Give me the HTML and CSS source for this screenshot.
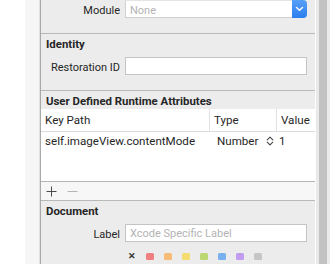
FILE: index.html
```html
<!DOCTYPE html>
<html lang="en">
<head>
  <meta charset="UTF-8">
  <title>Identity Inspector</title>
  <link rel="stylesheet" href="styles.css">
</head>
<body>
  <div class="screen">
    <div class="gutter"></div>
    <div class="inspector">
      <!-- Module -->
      <div class="row module-row">
        <label class="row-label">Module</label>
        <div class="popup">
          <span class="placeholder">None</span>
          <span class="popup-btn">
            <svg width="9" height="6" viewBox="0 0 9 6"><path d="M1.5 1.5 L4.5 4.3 L7.5 1.5" fill="none" stroke="#fff" stroke-width="1.5" stroke-linecap="round" stroke-linejoin="round"/></svg>
          </span>
        </div>
      </div>

      <!-- Identity -->
      <div class="section identity">
        <h2>Identity</h2>
        <div class="row">
          <label class="row-label">Restoration ID</label>
          <div class="field"></div>
        </div>
      </div>

      <!-- Runtime attributes -->
      <div class="section runtime">
        <h2>User Defined Runtime Attributes</h2>
        <div class="attr-table">
          <div class="thead">
            <span class="cell">Key Path</span>
            <span class="cell col-div">Type</span>
            <span class="cell col-div">Value</span>
          </div>
          <div class="trow">
            <span class="cell">self.imageView.contentMode</span>
            <span class="cell type-cell">Number
              <svg class="stepper" width="8" height="10" viewBox="0 0 8 10"><path d="M1.2 3.8 L4 1.2 L6.8 3.8 M1.2 6.2 L4 8.8 L6.8 6.2" fill="none" stroke="#444" stroke-width="1.1" stroke-linecap="round" stroke-linejoin="round"/></svg>
            </span>
            <span class="cell value-cell">1</span>
          </div>
        </div>
        <div class="table-tools">
          <svg width="11" height="11" viewBox="0 0 11 11"><path d="M5.5 0.5 V10.5 M0.5 5.5 H10.5" stroke="#4a4a4a" stroke-width="1"/></svg>
          <svg width="11" height="11" viewBox="0 0 11 11"><path d="M0.5 5.5 H10.5" stroke="#b4b4b4" stroke-width="1"/></svg>
        </div>
      </div>

      <!-- Document -->
      <div class="section document">
        <h2>Document</h2>
        <div class="row">
          <label class="row-label">Label</label>
          <div class="field"><span class="placeholder">Xcode Specific Label</span></div>
        </div>
        <div class="colors">
          <span class="clear">&#x2715;</span>
          <span class="dot red"></span>
          <span class="dot orange"></span>
          <span class="dot yellow"></span>
          <span class="dot green"></span>
          <span class="dot blue"></span>
          <span class="dot purple"></span>
          <span class="dot gray"></span>
        </div>
      </div>
    </div>
    <div class="scroller"><div class="track"></div></div>
  </div>
</body>
</html>
```

FILE: styles.css
```css
/* Generelle stiler */
* { box-sizing: border-box; }
body {
  margin: 0;
  padding: 0;
  font-family: 'Roboto', 'Liberation Sans', sans-serif;
  font-size: 11px;
  background-color: #fff;
  color: #262626;
}
.screen {
  display: flex;
  width: 330px;
  height: 264px;
  overflow: hidden;
}
.gutter {
  width: 40px;
  flex: none;
  background-color: #f6f6f6;
  border-left: 25px solid #fff;
  border-right: 1px solid #e2e2e2;
}
/* Inspektoren */
.inspector {
  width: 275px;
  flex: none;
  background-color: #ececec;
  border-left: 1px solid #a9a9a9;
}
.row {
  display: flex;
  align-items: center;
  height: 18px;
}
.row-label {
  width: 80px;
  padding-right: 1px;
  text-align: right;
  margin-right: 4px;
  padding-top: 2px;
}
.module-row { margin-bottom: 15px; }
.popup {
  display: flex;
  align-items: center;
  width: 182px;
  height: 18px;
  background-color: #fff;
  border: 1px solid #cfcfcf;
  border-top-color: #e4e4e4;
  border-radius: 0 4px 4px 0;
  padding-left: 4px;
  padding-top: 2px;
}
.popup .placeholder { flex: 1; }
.popup-btn {
  display: flex;
  align-items: center;
  justify-content: center;
  width: 15px;
  height: 18px;
  margin: -3px -1px -1px 0;
  background: linear-gradient(#58a0f7, #2a7ef0);
  border-radius: 0 4px 4px 0;
}
.placeholder { color: #b3b3b3; }
.field {
  width: 182px;
  height: 18px;
  background-color: #fff;
  border: 1px solid #c4c4c4;
  padding-left: 4px;
  line-height: 17px;
}
/* Seksjoner */
.section { border-top: 1px solid #b9b9b9; }
.section h2 {
  margin: 0;
  height: 18px;
  line-height: 20px;
  padding-left: 5px;
  font-size: 11.4px;
  font-weight: bold;
  color: #262626;
}
.identity .row { margin-top: 5px; }
.identity { padding-bottom: 15px; }
.attr-table {
  display: grid;
  grid-template-columns: 168px 67px 1fr;
  height: 73px;
  background-color: #fff;
  border-bottom: 1px solid #b6b6b6;
  align-content: start;
  font-size: 11.6px;
}
.thead, .trow { display: contents; }
.thead .cell {
  height: 23px;
  line-height: 23px;
  border-bottom: 1px solid #dcdcdc;
}
.cell {
  padding-left: 4px;
  white-space: nowrap;
}
.col-div { border-left: 1px solid #e2e2e2; }
.trow .cell {
  height: 17px;
  line-height: 18px;
}
.type-cell {
  padding-left: 8px;
  display: flex;
  align-items: center;
}
.stepper { margin-left: 8px; }
.value-cell { padding-left: 3px; }
.table-tools {
  display: flex;
  align-items: center;
  gap: 10px;
  height: 18px;
  padding-left: 5px;
  background-color: #f7f7f7;
}
.document .row { margin-top: 5px; }
.colors {
  display: flex;
  align-items: center;
  gap: 10px;
  margin-top: 10px;
  padding-left: 87px;
  height: 8px;
}
.clear {
  font-size: 9px;
  font-weight: bold;
  color: #333;
  width: 8px;
}
.dot {
  width: 8px;
  height: 7px;
  border-radius: 1.5px;
}
.red { background-color: #f07f80; }
.orange { background-color: #f6bb74; }
.yellow { background-color: #f5dc70; }
.green { background-color: #bcd872; }
.blue { background-color: #78b1ef; }
.purple { background-color: #c29cee; }
.gray { background-color: #c6c6c6; }
/* Rullefelt */
.scroller {
  flex: 1;
  border-left: 1px solid #fdfdfd;
  background-color: #e9e9e9;
  padding-left: 3px;
  padding-right: 3px;
}
.track {
  height: 100%;
  background-color: #c2c2c2;
}
```
